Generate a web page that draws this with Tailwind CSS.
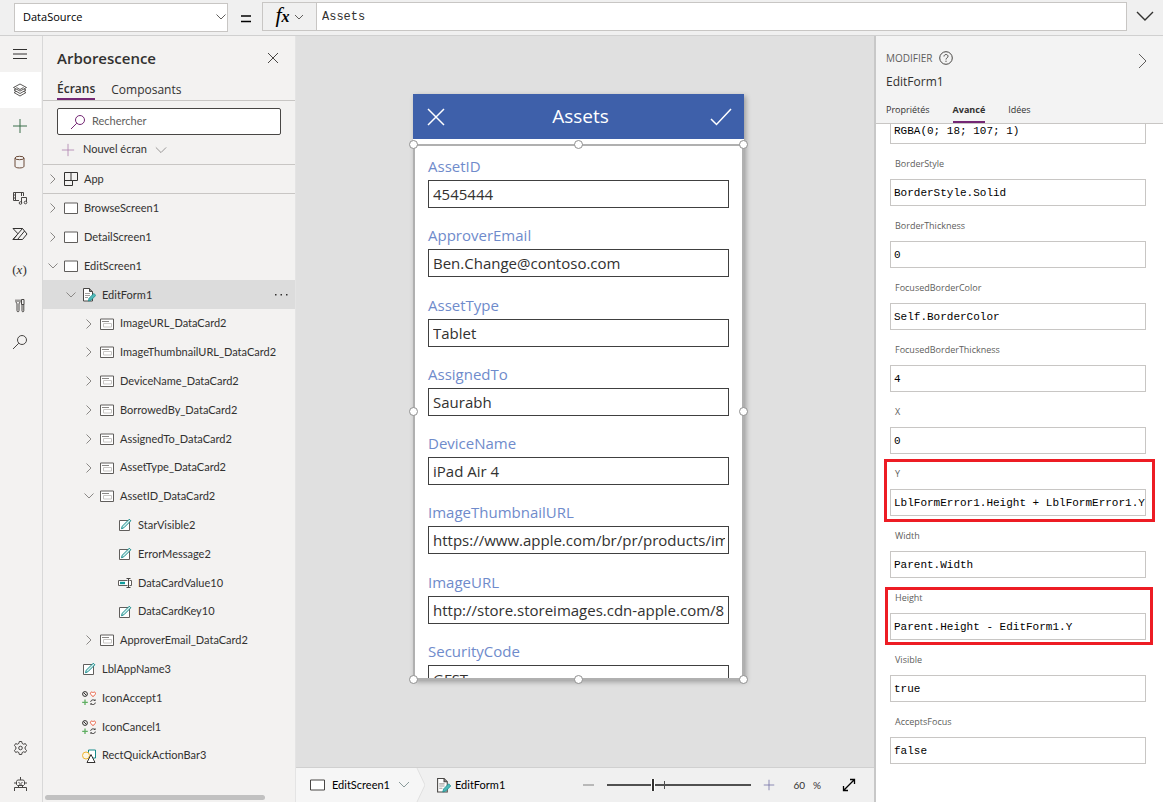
<!DOCTYPE html>
<html lang="fr">
<head>
<meta charset="utf-8">
<title>Assets</title>
<script src="https://cdn.jsdelivr.net/npm/@tailwindcss/browser@4"></script>
</head>
<body class="h-screen overflow-hidden flex flex-col bg-[#f0f0f0] font-['Open_Sans','Noto_Sans',sans-serif] text-[#323130] text-[11px]">

<svg class="hidden" xmlns="http://www.w3.org/2000/svg">
  <symbol id="i-right" viewBox="0 0 14 14"><path d="M4.500 2.500 9 7l-4.500 4.500" fill="none" stroke="#8a8886"/></symbol>
  <symbol id="i-down" viewBox="0 0 14 14"><path d="M2.500 4.500 7 9l4.500-4.500" fill="none" stroke="#8a8886"/></symbol>
  <symbol id="i-none" viewBox="0 0 14 14"></symbol>
  <symbol id="i-app" viewBox="0 0 14 14"><path d="M.5.5h13v8h-5v5h-8zM.5 8.500h8M7 .5v8" fill="none" stroke="#323130"/></symbol>
  <symbol id="i-screen" viewBox="0 0 14 14"><path d="M.5 2h13v10.500H.5z" fill="#fff" stroke="#605e5c"/></symbol>
  <symbol id="i-form" viewBox="0 0 14 14"><path d="M1.500.5h6l3 3v9.500h-9z" fill="#fff" stroke="#484644"/><path d="M7.500.5v3h3" fill="#8a8886" stroke="#484644"/><path d="M3 5.500h5M3 7.500h5M3 9.500h3" stroke="#a19f9d"/><path d="m6.300 13 .8-2.800 4.700-4.800 2 2-4.700 4.800z" fill="#4fb8b8" stroke="#138a8a" stroke-width=".7"/></symbol>
  <symbol id="i-card" viewBox="0 0 14 14"><path d="M.5 2h13v10.500H.5z" fill="#fff" stroke="#605e5c"/><path d="M2 4.500h7" stroke="#8a8886"/><path d="M3.500 6.500h8v3.500h-8z" fill="none" stroke="#c8c6c4"/></symbol>
  <symbol id="i-label" viewBox="0 0 14 14"><path d="M1.500 2.500h10v10h-10z" fill="#fff" stroke="#605e5c"/><path d="m3.500 10.700.8-2.500 7-7 1.500 1.600-7 7z" fill="#d8f3f1" stroke="#138a8a"/></symbol>
  <symbol id="i-input" viewBox="0 0 14 14"><path d="M9.500 4.500h-9v5h9M11.500 4.500h2v5h-2" fill="#fff" stroke="#605e5c"/><path d="M2 5.800h5v2.400H2z" fill="#0f9d9d"/><path d="M8.500 2.500h4M10.500 2.500v9M8.500 11.500h4" stroke="#484644" fill="none"/></symbol>
  <symbol id="i-icons" viewBox="0 0 14 14"><circle cx="3" cy="3" r="2.400" fill="none" stroke="#323130"/><path d="m1.500 1.500 3 3" stroke="#323130"/><path d="M11 5.600 8.500 3.200C7.800 1.400 10 .2 11 1.800c1-1.600 3.200-.4 2.500 1.400z" fill="#fff" stroke="#e8593b"/><path d="M3 8.500v5.500M.2 11.300h5.600" stroke="#5fae62" stroke-width="1.300"/><path d="M8.700 10.800c.3-2.200 3.200-2.600 4.300-.8V8.300M13.300 11.600c-.3 2.200-3.200 2.600-4.300.8v1.700" fill="none" stroke="#323130"/></symbol>
  <symbol id="i-shape" viewBox="0 0 14 14"><path d="M6.500 1h7v8h-7z" fill="#fff" stroke="#138a8a"/><circle cx="4" cy="6.500" r="3.500" fill="#fdf6e3" stroke="#efb52e"/><path d="m9 5.500 4 8H5z" fill="#fff" stroke="#323130"/></symbol>
  <symbol id="i-search" viewBox="0 0 16 16"><circle cx="10" cy="6" r="4.500" fill="none" stroke="currentColor"/><path d="M6.800 9.200 1 15" stroke="currentColor"/></symbol>
  <symbol id="i-plus" viewBox="0 0 16 16"><path d="M8 1v14M1 8h14" stroke="currentColor" fill="none"/></symbol>
</svg>

<header class="h-9 shrink-0 flex items-start pt-[2px] border-b border-[#d0d0d0]">
  <div class="relative ml-[14px] mt-px w-[214px]">
    <select aria-label="Propriété" class="appearance-none w-full h-[29px] bg-white border border-[#c8c6c4] pl-2 text-black text-[11px]"><option>DataSource</option></select>
    <svg class="absolute right-[1px] top-[8px] size-3 pointer-events-none" viewBox="0 0 12 12"><path d="m1.500 3.500 4.500 4.500 4.500-4.500" fill="none" stroke="#605e5c"/></svg>
  </div>
  <svg class="ml-[13px] mt-[13px] w-[10px] h-2" viewBox="0 0 10 8"><path d="M0 1h10M0 6.500h10" stroke="#000" stroke-width="1.300"/></svg>
  <button class="ml-[11px] h-[29px] w-[55px] border border-[#c8c6c4] flex items-center justify-center gap-1" aria-label="Fonction">
    <span class="font-['Liberation_Serif',serif] italic text-[22px] leading-5 text-black">f<span class="text-base font-bold">x</span></span>
    <svg class="size-[10px]" viewBox="0 0 10 10"><path d="m1 3 4 4 4-4" fill="none" stroke="#605e5c"/></svg>
  </button>
  <input aria-label="Formule" value="Assets" class="flex-1 min-w-0 h-[29px] -ml-px bg-white border border-[#c8c6c4] px-[5px] font-['Liberation_Mono',monospace] text-xs">
  <button class="w-9 h-7 flex items-center justify-center" aria-label="Développer"><svg class="w-[18px] h-3" viewBox="0 0 18 12"><path d="m1 2 8 8 8-8" fill="none" stroke="#323130" stroke-width="1.400"/></svg></button>
</header>

<div class="flex-1 min-h-0 flex">
  <nav class="w-[43px] shrink-0 bg-[#f3f2f1] border-r border-[#d8d8d8] flex flex-col [&>button]:h-9 [&>button]:w-[41px] [&>button]:flex [&>button]:items-center [&>button]:justify-center [&>button]:pr-[2px] [&_svg]:size-4">
    <button aria-label="Menu"><svg viewBox="0 0 16 16"><path d="M1 3.500h14M1 8h14M1 12.500h14" stroke="#323130"/></svg></button>
    <button aria-label="Arborescence" class="bg-white"><svg viewBox="0 0 16 16" fill="#fff" stroke="#484644" stroke-width=".9"><path d="m2 10.500 6 3.500 6-3.500-6-3.200z"/><path d="m2 8 6 3.500L14 8 8 4.800z"/><path d="m1.500 5.500 6.500 3.600 6.500-3.600L8 2z"/><path d="m4.500 5.500 3.500 2 3.500-2"/></svg></button>
    <button aria-label="Insérer" class="text-[#3b6e4a]"><svg><use href="#i-plus"/></svg></button>
    <button aria-label="Données"><svg viewBox="0 0 16 16" fill="none" stroke="#6a4a38"><ellipse cx="7.500" cy="4" rx="4.500" ry="1.700"/><path d="M3 4v8.300c0 2.200 9 2.200 9 0V4"/></svg></button>
    <button aria-label="Média"><svg viewBox="0 0 16 16" fill="none" stroke="#484644"><path d="M7 10.500H1.500v-8h10V6M3.500 3v7M9.500 3v3M1.500 5h2M1.500 8h2"/><path d="M9.500 13V7.500h5V12"/><circle cx="8.500" cy="13" r="1.300"/><circle cx="13.500" cy="12.500" r="1.300"/></svg></button>
    <button aria-label="Power Automate"><svg viewBox="0 0 16 16" fill="none" stroke="#323130"><path d="M1 2.500h9.500L15 8l-4.500 5.500H1L10.500 2.500M1 2.500l5 5.300M5.500 13.500 12.600 5M1 13.500l4-4.500"/></svg></button>
    <button aria-label="Variables"><span class="font-['Liberation_Serif',serif] text-[13px] text-[#323130]">(<i>x</i>)</span></button>
    <button aria-label="Outils"><svg viewBox="0 0 16 16" fill="none" stroke="#484644"><path d="M4 1.500v3l1 .8v7.200c0 1.800 2 1.800 2 0V5.300l1-.8v-3M6 1.500V4M9.500 1.500h2.500v5H9.500zM10 6.500v6.300c0 1.400 1.800 1.400 1.800 0V6.500"/></svg></button>
    <button aria-label="Rechercher" class="text-[#484644]"><svg><use href="#i-search"/></svg></button>
    <span class="flex-1"></span>
    <button aria-label="Paramètres"><svg viewBox="0 0 16 16" fill="none" stroke="#484644"><circle cx="8.500" cy="8" r="1.800"/><path d="M7.300 1.500h2.400l.4 1.900 1.400.8 1.900-.6 1.200 2-1.500 1.400v2l1.500 1.400-1.200 2-1.900-.6-1.400.8-.4 1.900H7.300l-.4-1.900-1.400-.8-1.900.6-1.200-2L3.900 9V7L2.400 5.600l1.200-2 1.900.6 1.400-.8z"/></svg></button>
    <button aria-label="Agent virtuel"><svg viewBox="0 0 16 16" fill="none" stroke="#484644"><path d="M8.500 1v3M5.500 4h6l1 1.500v3l-1 1h-6l-1-1v-3zM3 6v2M14 6v2M6.500 6.500h1M9.500 6.500h1M7 8h3M6.500 9.500v2h4v-2M2.500 15v-3.500h12V15"/></svg></button>
  </nav>

  <aside class="w-[253px] shrink-0 bg-[#f3f2f1] border-r border-[#e4e4e4] flex flex-col">
    <div class="h-11 shrink-0 flex items-center justify-between pl-[14px] pr-4">
      <h2 class="text-[15px] font-semibold">Arborescence</h2>
      <button aria-label="Fermer"><svg class="size-3" viewBox="0 0 12 12"><path d="m1 1 10 10M11 1 1 11" stroke="#484644"/></svg></button>
    </div>
    <div class="h-[21px] shrink-0 border-b border-[#c8c6c4] flex gap-4 pl-[14px] text-xs leading-[18px]" role="tablist">
      <button role="tab" class="font-semibold border-b-2 border-[#742774]">Écrans</button>
      <button role="tab">Composants</button>
    </div>
    <div class="shrink-0 mx-[14px] mt-[7px] h-[27px] bg-white border border-[#484644] rounded-[2px] flex items-center pl-3 gap-[6px]">
      <svg class="size-4 shrink-0 text-[#742774]"><use href="#i-search"/></svg>
      <input aria-label="Rechercher" placeholder="Rechercher" class="w-full min-w-0 outline-none font-[Lato,sans-serif] text-[11px] placeholder:text-[#605e5c]">
    </div>
    <div class="shrink-0 h-[30px] border-b border-[#c8c6c4] flex font-[Lato,sans-serif]">
      <button class="flex items-center gap-2 pl-[18px]"><svg class="size-[14px] text-[#b287b2]"><use href="#i-plus"/></svg><span>Nouvel écran</span><svg class="size-3" viewBox="0 0 14 14"><path d="m1 4 6 6 6-6" fill="none" stroke="#8a8886"/></svg></button>
    </div>
    <div id="app" class="shrink-0 h-[29px] border-b border-[#c8c6c4] font-[Lato,sans-serif]"></div>
    <ul id="tree" class="flex-1 min-h-0 grid auto-rows-fr font-[Lato,sans-serif]"></ul>
    <div class="shrink-0 h-8 flex items-end pb-[2px] pl-[2px]"><div class="w-[220px] h-[5px] rounded-full bg-[#c1c1c1]"></div></div>
  </aside>

  <main class="flex-1 min-w-0 flex flex-col">
    <div class="flex-1 min-h-0 bg-[#e0e0e0] flex justify-center pt-[58px] pb-[87px]">
      <section class="w-[331px] -ml-[13px] bg-white shadow-[2px_2px_5px_rgba(0,0,0,0.3)] flex flex-col">
        <div class="h-[45px] shrink-0 bg-[#3e60aa] text-white flex items-center justify-between pl-[14px] pr-3">
          <button class="w-6" aria-label="Annuler"><svg class="size-[18px]" viewBox="0 0 18 18"><path d="m1 1 16 16M17 1 1 17" stroke="#fff" stroke-width="1.500"/></svg></button>
          <h1 class="text-[19px]">Assets</h1>
          <button aria-label="Valider"><svg class="w-[22px] h-[18px]" viewBox="0 0 22 18"><path d="m1 11 5.500 5.500L21 1" fill="none" stroke="#fff" stroke-width="1.500"/></svg></button>
        </div>
        <div class="relative mt-[5px] flex-1 min-h-0 border-2 border-[#b0b0b0]">
          <div class="h-full overflow-hidden"><div id="fields" class="h-[554px] grid auto-rows-fr px-[13px]"></div></div>
          <div class="absolute -inset-[6px] grid grid-cols-3 grid-rows-3 pointer-events-none [&>i]:size-[9px] [&>i]:rounded-full [&>i]:bg-white [&>i]:border [&>i]:border-[#8f8f8f]">
            <i></i><i class="justify-self-center"></i><i class="justify-self-end"></i>
            <i class="self-center"></i><b></b><i class="self-center justify-self-end"></i>
            <i class="self-end"></i><i class="self-end justify-self-center"></i><i class="self-end justify-self-end"></i>
          </div>
        </div>
      </section>
    </div>
    <footer class="h-[35px] shrink-0 border-t border-[#d0d0d0] flex items-center text-black font-[Lato,sans-serif]">
      <div class="relative h-full w-[129px] shrink-0 flex items-center gap-[7px] pl-[14px]">
        <svg class="absolute inset-0 h-full w-full" viewBox="0 0 129 34" preserveAspectRatio="none"><path d="M0 0h121l8 17-8 17H0z" fill="#f6f6f6"/><path d="m121 0 8 17-8 17" fill="none" stroke="#e0e0e0"/></svg>
        <svg class="relative w-[15px] h-3" viewBox="0 0 15 12"><path d="M.5 1h14v10H.5z" fill="#fff" stroke="#484644"/></svg>
        <button class="relative flex items-center gap-2">EditScreen1<svg class="w-3 h-2" viewBox="0 0 12 8"><path d="m1 1 5 5 5-5" fill="none" stroke="#8a9a9a"/></svg></button>
      </div>
      <button class="ml-[11px] flex items-center gap-1"><svg class="size-[15px]"><use href="#i-form"/></svg>EditForm1</button>
      <span class="flex-1"></span>
      <button aria-label="Zoom arrière"><svg class="w-[11px] h-3" viewBox="0 0 11 12"><path d="M0 6h11" stroke="#a6a6a6" stroke-width="1.500"/></svg></button>
      <div class="relative ml-[13px] w-36 h-4 flex items-center">
        <input type="range" aria-label="Zoom" min="0" max="100" value="31" class="w-full h-[2px] bg-[#505050] appearance-none [&::-webkit-slider-thumb]:appearance-none [&::-webkit-slider-thumb]:w-1 [&::-webkit-slider-thumb]:h-3 [&::-webkit-slider-thumb]:bg-[#323130] [&::-webkit-slider-thumb]:border-x [&::-webkit-slider-thumb]:border-white">
        <span class="absolute left-[57px] top-1 w-px h-2 bg-[#505050]"></span>
      </div>
      <button class="ml-3 text-[#6b69a0]" aria-label="Zoom avant"><svg class="size-3"><use href="#i-plus"/></svg></button>
      <span class="ml-[18px] flex gap-2 text-[10px] text-[#323130]"><span>60</span><span>%</span></span>
      <button class="ml-[21px] mr-[18px]" aria-label="Ajuster"><svg class="size-[14px]" viewBox="0 0 14 14"><path d="M2 12 12 2M8 1.500h4.500V6M1.500 8v4.500H6" fill="none" stroke="#000" stroke-width="1.300"/></svg></button>
    </footer>
  </main>

  <aside class="w-[289px] shrink-0 bg-white border-l-2 border-[#c8c8c8] flex flex-col">
    <div class="relative h-[88px] shrink-0 bg-[#f3f3f3] border-b border-[#c8c6c4] pl-[10px] flex flex-col justify-between">
      <div>
        <div class="mt-[14px] flex items-center gap-[6px] h-4 text-[10px] text-[#605e5c]">MODIFIER
          <button aria-label="Aide"><svg class="size-[14px]" viewBox="0 0 14 14" fill="none" stroke="#484644"><circle cx="7" cy="7" r="6.300"/><path d="M5 5.500c0-2.600 4-2.600 4-.2C9 7 7 6.800 7 8.500M7 9.700v1.200"/></svg></button></div>
        <h2 class="mt-2 text-xs leading-4">EditForm1</h2>
      </div>
      <button class="absolute right-4 top-[17px]" aria-label="Réduire"><svg class="w-[9px] h-4" viewBox="0 0 9 16"><path d="m1 1 7 7-7 7" fill="none" stroke="#605e5c"/></svg></button>
      <div class="flex gap-[23px] text-[9px]" role="tablist">
        <button role="tab" class="pb-[5px] border-b-2 border-transparent">Propriétés</button>
        <button role="tab" class="pb-[5px] border-b-2 border-[#742774] font-bold">Avancé</button>
        <button role="tab" class="pb-[5px] border-b-2 border-transparent">Idées</button>
      </div>
    </div>
    <div class="flex-1 min-h-0 overflow-hidden"><div id="props" class="-mt-[7px] pl-[14px] pr-[17px]"></div></div>
  </aside>
</div>

<script>
const pad = ['pl-[3px]', 'pl-[21px]', 'pl-[39px]', 'pl-[57px]'];
const row = (depth, arrow, icon, name, sel) =>
  `<div class="h-full flex items-center ${pad[depth]} ${sel ? 'bg-[#dcdcdc]' : ''}"><svg class="size-[14px]"><use href="#i-${arrow}"/></svg><button class="flex flex-1 items-center gap-[6px] ml-1 text-left"><svg class="size-[14px] shrink-0"><use href="#i-${icon}"/></svg>${name}</button>${sel ? '<button aria-label="Plus" class="pr-[7px]"><svg class="w-[13px] h-2" viewBox="0 0 13 8"><path d="M0 3h1.500v1.500H0zM5.500 3H7v1.500H5.500zM11 3h1.500v1.500H11z" fill="#323130"/></svg></button>' : ''}</div>`;
document.getElementById('app').innerHTML = row(0, 'right', 'app', 'App');
document.getElementById('tree').innerHTML = [
  [0,'right','screen','BrowseScreen1'],[0,'right','screen','DetailScreen1'],[0,'down','screen','EditScreen1'],
  [1,'down','form','EditForm1',true],
  [2,'right','card','ImageURL_DataCard2'],[2,'right','card','ImageThumbnailURL_DataCard2'],[2,'right','card','DeviceName_DataCard2'],
  [2,'right','card','BorrowedBy_DataCard2'],[2,'right','card','AssignedTo_DataCard2'],[2,'right','card','AssetType_DataCard2'],
  [2,'down','card','AssetID_DataCard2'],
  [3,'none','label','StarVisible2'],[3,'none','label','ErrorMessage2'],[3,'none','input','DataCardValue10'],[3,'none','label','DataCardKey10'],
  [2,'right','card','ApproverEmail_DataCard2'],
  [1,'none','label','LblAppName3'],[1,'none','icons','IconAccept1'],[1,'none','icons','IconCancel1'],[1,'none','shape','RectQuickActionBar3']
].map(r => `<li>${row(...r)}</li>`).join('');

document.getElementById('fields').innerHTML = [
  ['AssetID','4545444'],['ApproverEmail','Ben.Change@contoso.com'],['AssetType','Tablet'],['AssignedTo','Saurabh'],
  ['DeviceName','iPad Air 4'],['ImageThumbnailURL','https://www.apple.com/br/pr/products/images'],
  ['ImageURL','http://store.storeimages.cdn-apple.com/8'],['SecurityCode','GFST']
].map(([l, v], i) => `<div class="pt-2"><label for="f${i}" class="block h-[26px] leading-6 text-[15px] text-[#6f8bcb]">${l}</label><input id="f${i}" value="${v}" class="block w-full h-7 border border-[#404040] pl-1 pr-[3px] text-[15px] text-[#323130]"></div>`).join('');

const marks = {
  Y: '<div class="absolute top-[5px] -bottom-[6px] -left-[6px] -right-[9px] border-3 border-[#ed1c24] pointer-events-none"></div>',
  Height: '<div class="absolute top-[9px] -bottom-[5px] -left-[5px] -right-[7px] border-3 border-[#ed1c24] pointer-events-none"></div>'
};
const box = "block w-full h-[27px] border border-[#c8c6c4] pl-[3px] font-['Liberation_Mono',monospace] text-[11px] text-black";
document.getElementById('props').innerHTML = `<input aria-label="BorderColor" value="RGBA(0; 18; 107; 1)" class="${box}">` + [
  ['BorderStyle','BorderStyle.Solid'],['BorderThickness','0'],['FocusedBorderColor','Self.BorderColor'],
  ['FocusedBorderThickness','4'],['X','0'],['Y','LblFormError1.Height + LblFormError1.Y'],['Width','Parent.Width'],
  ['Height','Parent.Height - EditForm1.Y'],['Visible','true'],['AcceptsFocus','false']
].map(([l, v]) => `<div class="relative h-[62px] pt-3"><label for="p${l}" class="block h-[23px] leading-4 pl-[5px] text-[9px] text-[#605e5c]">${l}</label><input id="p${l}" value="${v}" class="${box}">${marks[l] || ''}</div>`).join('');
</script>
</body>
</html>
